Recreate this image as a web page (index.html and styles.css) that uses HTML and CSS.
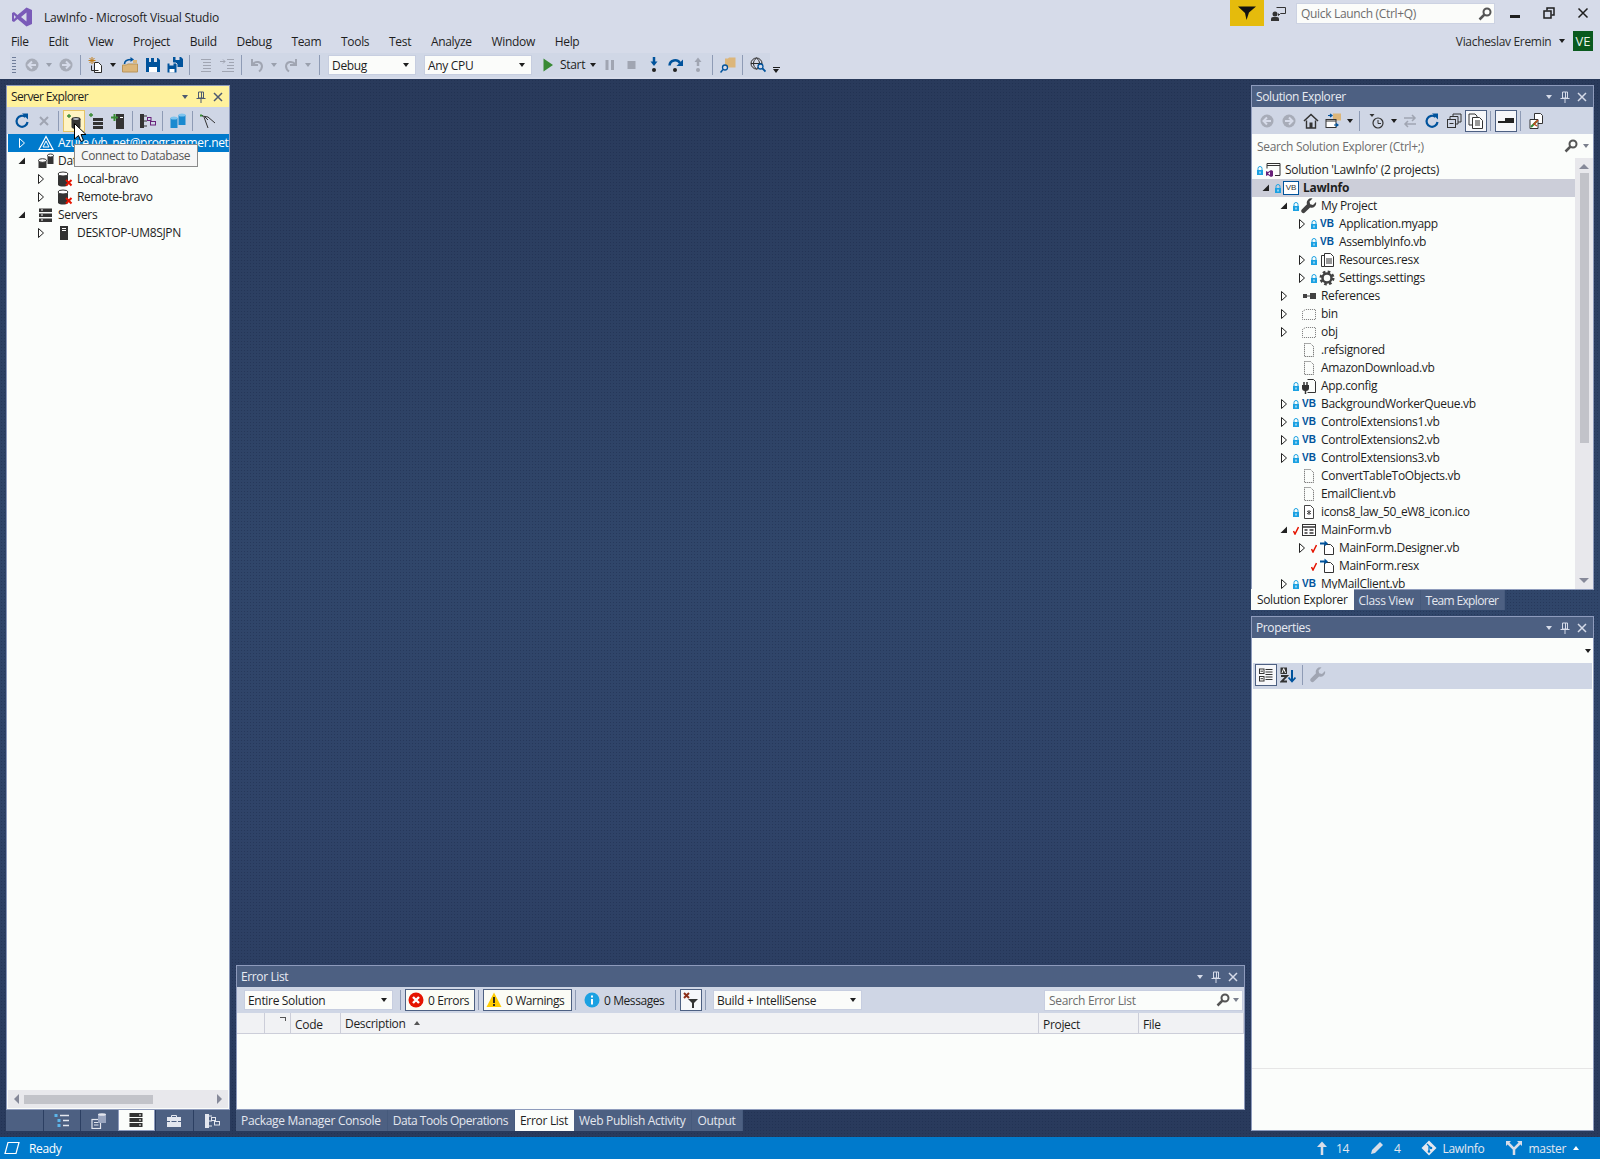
FILE: index.html
```html
<!DOCTYPE html>
<html lang="en">
<head>
<meta charset="utf-8">
<title>LawInfo - Microsoft Visual Studio</title>
<link rel="stylesheet" href="styles.css">
</head>
<body>
<svg class="defs" xmlns="http://www.w3.org/2000/svg">
  <symbol id="logo" viewBox="0 0 20 20"><path d="M14.5 0.5L20 3v14l-5.500 2.500L5.500 12 2 15l-2-1V6l2-1 3.500 3zM14.500 5.500L9 10l5.500 4.500z" fill="#7a5bb8"/><path d="M2 8v4l2-2z" fill="#d6dbe9"/></symbol>
  <symbol id="funnel" viewBox="0 0 18 14"><path d="M0 0.500h18L11 6.500 8.500 14 7 7z" fill="#111"/></symbol>
  <symbol id="feedback" viewBox="0 0 16 16"><circle cx="5" cy="8" r="2.500" fill="#333"/><path d="M1 15v-2a2 2 0 012-2h4a2 2 0 012 2v2z" fill="#333"/><path d="M6.500 1.500h9v6h-5l-2 2v-2" fill="none" stroke="#333"/></symbol>
  <symbol id="search" viewBox="0 0 16 16"><circle cx="10" cy="6" r="3.500" fill="none" stroke="#555" stroke-width="2"/><path d="M7.500 8.500l-5 5" stroke="#555" stroke-width="2.500"/></symbol>
  <symbol id="back" viewBox="0 0 16 16"><circle cx="8" cy="8" r="6.500" fill="#a7acb8"/><path d="M12 8H5M8 4.500L4.500 8 8 11.500" fill="none" stroke="#d6dbe9" stroke-width="2"/></symbol>
  <symbol id="forward" viewBox="0 0 16 16"><circle cx="8" cy="8" r="6.500" fill="#a7acb8"/><path d="M4 8h7M8 4.500L11.500 8 8 11.500" fill="none" stroke="#d6dbe9" stroke-width="2"/></symbol>
  <symbol id="newproj" viewBox="0 0 16 16"><path d="M6.500 5.500h4l3 3v7h-7z" fill="#fff" stroke="#2b2b2b"/><path d="M3.500 8.500v5h7" fill="none" stroke="#2b2b2b"/><path d="M4 0v7M0.500 3.500h7M1.500 1l5 5M6.500 1l-5 5" stroke="#c27d1a"/></symbol>
  <symbol id="open" viewBox="0 0 16 16"><path d="M0.500 8h4l1-1h10v8H0.500z" fill="#dcb67a" stroke="#b9945a"/><path d="M2.500 7c0-3 2-4.500 7-4.500" fill="none" stroke="#00539c" stroke-width="1.600"/><path d="M8.500 0l3.500 2.500L8.500 5z" fill="#00539c"/><rect x="11" y="3" width="4" height="3" fill="#dcb67a"/></symbol>
  <symbol id="save" viewBox="0 0 16 16"><path d="M1 1h12l2 2v12H1z" fill="#00539c"/><rect x="4" y="1" width="2" height="4" fill="#d6dbe9"/><rect x="9" y="1" width="3" height="4" fill="#d6dbe9"/><rect x="4" y="10" width="8" height="5" fill="#fff"/></symbol>
  <symbol id="saveall" viewBox="0 0 16 16"><path d="M6 0h8l2 2v8H6z" fill="#00539c"/><rect x="8.500" y="0" width="4" height="3" fill="#d6dbe9"/><path d="M0 6h9l1 1v9H0z" fill="#00539c" stroke="#d6dbe9"/><rect x="2.500" y="5.500" width="4" height="3" fill="#d6dbe9"/><rect x="2.500" y="12" width="5" height="3.500" fill="#fff"/></symbol>
  <symbol id="indent" viewBox="0 0 16 16"><path d="M4 2.500h10M6 5.500h8M6 8.500h8M6 11.500h8M4 14.500h10" stroke="#a0a5b2"/></symbol>
  <symbol id="outdent" viewBox="0 0 16 16"><path d="M8 2.500h7M10 5.500h5M8 8.500h7M8 11.500h7M3 14.500h12" stroke="#a0a5b2"/><path d="M1 4.500h5M4 2.500l2 2-2 2" fill="none" stroke="#a0a5b2"/></symbol>
  <symbol id="undo" viewBox="0 0 16 16"><path d="M3 2v6h6" fill="none" stroke="#a0a5b2" stroke-width="2"/><path d="M3.500 7.500c3-4 9-3 9.500 1.500 0 2.500-1 4-3 5.500" fill="none" stroke="#a0a5b2" stroke-width="2"/></symbol>
  <symbol id="redo" viewBox="0 0 16 16"><path d="M13 2v6H7" fill="none" stroke="#a0a5b2" stroke-width="2"/><path d="M12.500 7.500c-3-4-9-3-9.500 1.500 0 2.500 1 4 3 5.500" fill="none" stroke="#a0a5b2" stroke-width="2"/></symbol>
  <symbol id="play" viewBox="0 0 16 16"><path d="M3.500 1.500L13 8l-9.500 6.500z" fill="#388a34"/></symbol>
  <symbol id="pause" viewBox="0 0 16 16"><rect x="3.500" y="3" width="3" height="10" fill="#a0a5b2"/><rect x="9" y="3" width="3" height="10" fill="#a0a5b2"/></symbol>
  <symbol id="stop" viewBox="0 0 16 16"><rect x="3.500" y="4" width="8" height="8" fill="#a0a5b2"/></symbol>
  <symbol id="stepin" viewBox="0 0 16 16"><path d="M8 0v6" stroke="#00539c" stroke-width="2.500"/><path d="M4.500 4.500h7L8 9z" fill="#00539c"/><circle cx="8" cy="13" r="2" fill="#222"/></symbol>
  <symbol id="stepover" viewBox="0 0 16 16"><path d="M1.500 8.500C2 3 9 1.500 12 6" fill="none" stroke="#00539c" stroke-width="2.500"/><path d="M15 2.500v6.500H8.500z" fill="#00539c"/><circle cx="7" cy="13" r="2" fill="#222"/></symbol>
  <symbol id="stepout" viewBox="0 0 16 16"><path d="M8 3v6" stroke="#a0a5b2" stroke-width="2.500"/><path d="M4.500 5h7L8 0.500z" fill="#a0a5b2"/><circle cx="8" cy="13" r="2" fill="#a0a5b2"/></symbol>
  <symbol id="findfolder" viewBox="0 0 16 16"><path d="M5 1.500h3l1-1h6.500v10H5z" fill="#dcb67a"/><circle cx="5" cy="10.500" r="2.500" fill="#d6dbe9" stroke="#00539c" stroke-width="1.300"/><path d="M3 12.500l-2.500 3" stroke="#00539c" stroke-width="1.500"/></symbol>
  <symbol id="globe" viewBox="0 0 16 16"><circle cx="6.500" cy="6.500" r="5.500" fill="#d6dbe9" stroke="#2b2b2b"/><path d="M1 6.500h11M6.500 1c-4 3-4 8 0 11M6.500 1c4 3 4 8 0 11" fill="none" stroke="#2b2b2b"/><circle cx="10.500" cy="9.500" r="2.500" fill="#d6dbe9" stroke="#00539c" stroke-width="1.300"/><path d="M12.500 11.500l3 3" stroke="#00539c" stroke-width="1.800"/></symbol>
  <symbol id="refresh" viewBox="0 0 16 16"><path d="M11.500 4A5.500 5.500 0 1013.500 9" fill="none" stroke="#00539c" stroke-width="2.200"/><path d="M8 0.500h6v6z" fill="#00539c"/></symbol>
  <symbol id="xgray" viewBox="0 0 16 16"><path d="M4 4l8 8M12 4l-8 8" stroke="#a0a5b2" stroke-width="2"/></symbol>
  <symbol id="connect" viewBox="0 0 16 16"><path d="M3 1v4M1 3h4" stroke="#388a34" stroke-width="1.300"/><ellipse cx="10" cy="6" rx="4.500" ry="2" fill="#333"/><path d="M5.500 6v8c0 1 2 2 4.500 2s4.500-1 4.500-2V6" fill="#333"/><ellipse cx="10" cy="6" rx="3" ry="1" fill="#b9bec9"/></symbol>
  <symbol id="addserver" viewBox="0 0 16 16"><path d="M3 0v4M1 2h4" stroke="#388a34" stroke-width="1.300"/><rect x="5" y="5" width="10" height="3" fill="#333"/><rect x="5" y="9" width="10" height="3" fill="#333"/><rect x="5" y="13" width="10" height="3" fill="#333"/></symbol>
  <symbol id="addtower" viewBox="0 0 16 16"><rect x="6" y="1" width="8" height="15" fill="#333"/><path d="M1 4.500h7M4.500 1v7" stroke="#388a34" stroke-width="2"/><rect x="10" y="4" width="3" height="1" fill="#fff"/></symbol>
  <symbol id="diagram" viewBox="0 0 16 16"><rect x="0" y="1" width="4" height="14" fill="#333"/><path d="M4 3h3M4 8h3M4 13h3" stroke="#333"/><rect x="7.500" y="4.500" width="3.500" height="3" fill="none" stroke="#68217a"/><rect x="10.500" y="8.500" width="5" height="3.500" fill="none" stroke="#68217a"/></symbol>
  <symbol id="dbblue" viewBox="0 0 16 16"><path d="M0.500 5h7v10h-7z" fill="#1b8ad0"/><ellipse cx="4" cy="5" rx="3.500" ry="1.500" fill="#7fc4ee"/><path d="M8.500 2h7v10h-7z" fill="#1b8ad0"/><ellipse cx="12" cy="2" rx="3.500" ry="1.500" fill="#7fc4ee"/></symbol>
  <symbol id="picktool" viewBox="0 0 16 16"><path d="M1 1v3M0 2.500h3" stroke="#388a34"/><path d="M2 3l6 1 7 6M4 4l4 11M8 7l-3-3" fill="none" stroke="#333"/></symbol>
  <symbol id="azure" viewBox="0 0 16 16"><path d="M8 1.500L1 14.500h14z" fill="none" stroke="#fff" stroke-width="1.200"/><path d="M8 6L5 12h6z" fill="none" stroke="#fff"/></symbol>
  <symbol id="dataconn" viewBox="0 0 16 16"><path d="M0.500 7.500h8v7.500h-8z" fill="#333"/><ellipse cx="4.500" cy="7.500" rx="4" ry="1.800" fill="#fff" stroke="#333"/><path d="M9.500 2h6v9h-6z" fill="#333"/><ellipse cx="12.500" cy="2.500" rx="3" ry="1.500" fill="#fff" stroke="#333"/></symbol>
  <symbol id="dbx" viewBox="0 0 16 16"><path d="M1 3h10v11c-2 2-8 2-10 0z" fill="#333"/><ellipse cx="6" cy="3" rx="5" ry="2" fill="#fff" stroke="#333"/><path d="M9 9l5.500 5.500M14.500 9L9 14.500" stroke="#e51400" stroke-width="2"/></symbol>
  <symbol id="servers" viewBox="0 0 16 16"><rect x="1" y="1.500" width="13" height="3.500" fill="#333"/><rect x="1" y="6.500" width="13" height="3.500" fill="#333"/><rect x="1" y="11.500" width="13" height="3.500" fill="#333"/><path d="M3 3h2M3 8h2M3 13h2" stroke="#fff"/></symbol>
  <symbol id="tower" viewBox="0 0 16 16"><rect x="3" y="1" width="8" height="14" fill="#333"/><path d="M5 3.500h4M5 5.500h4" stroke="#fff"/></symbol>
  <symbol id="home" viewBox="0 0 16 16"><path d="M1 8l7-6.500L15 8" fill="none" stroke="#333" stroke-width="1.600"/><path d="M3.500 7.500v7.500h9V7.500" fill="none" stroke="#333" stroke-width="1.400"/><rect x="6.500" y="9.500" width="3" height="5.500" fill="#333"/></symbol>
  <symbol id="syncview" viewBox="0 0 16 16"><rect x="8" y="0.500" width="8" height="7" fill="#dcb67a"/><rect x="1" y="6.500" width="10" height="8" fill="#fff" stroke="#333"/><path d="M1 8h10" stroke="#333"/><path d="M3 2.500h4M5 1l2 1.500L5 4M9 12h4M11 10.500l2 1.500-2 1.500" fill="none" stroke="#00539c" stroke-width="1.200"/></symbol>
  <symbol id="clock" viewBox="0 0 16 16"><path d="M0.500 1h5L3 4z" fill="#333"/><circle cx="9" cy="10" r="5" fill="none" stroke="#333" stroke-width="1.200"/><path d="M9 7v3.500h3" fill="none" stroke="#333"/></symbol>
  <symbol id="swap" viewBox="0 0 16 16"><path d="M2 5h11M10 2l3 3-3 3M14 11H3M6 8l-3 3 3 3" fill="none" stroke="#a0a5b2" stroke-width="1.500"/></symbol>
  <symbol id="collapse" viewBox="0 0 16 16"><rect x="1.500" y="6.500" width="8" height="8" fill="none" stroke="#333"/><path d="M4 6V3.500h8V11h-2M7 3V1h8v8h-3" fill="none" stroke="#333"/><path d="M3.500 10.500h4" stroke="#333"/></symbol>
  <symbol id="showall" viewBox="0 0 16 16"><path d="M1 1h6l2 2v2" fill="none" stroke="#333"/><path d="M1 1v11h3" fill="none" stroke="#333"/><path d="M4.500 4.500h7l3 3v8h-10z" fill="#fff" stroke="#333"/><path d="M7 8h5M7 10h5M7 12h5" stroke="#333"/></symbol>
  <symbol id="preview" viewBox="0 0 16 16"><rect x="0" y="8" width="16" height="2" fill="#222"/><rect x="7" y="5" width="9" height="4" fill="#222"/></symbol>
  <symbol id="propspage" viewBox="0 0 16 16"><path d="M6.500 0.500h6l2 2v8h-8z" fill="#fff" stroke="#333"/><path d="M2 6.500h8v9H2z" fill="#fff" stroke="#333"/><path d="M3 14l6-6" stroke="#388a34" stroke-width="2"/><path d="M9 13l-3-2 4-4" fill="none" stroke="#c2491d" stroke-width="1.500"/></symbol>
  <symbol id="slnfile" viewBox="0 0 16 16"><path d="M2 1.500h13v12h-5" fill="none" stroke="#333"/><path d="M2 1.500v5" stroke="#333"/><path d="M2 3.500h13" stroke="#333"/><path d="M1 9l2 1 3-2 2 1v5l-2 1-3-2-2 1z" fill="#68217a"/><path d="M5 10v3l-2-1.500z" fill="#fff"/></symbol>
  <symbol id="wrench" viewBox="0 0 16 16"><path d="M15 4l-3 3-2.800-.8L8.500 3.500 11.500.5a4.500 4.500 0 00-5.500 5.800L0.800 11.500a2.200 2.200 0 003.100 3.100l5.200-5.200A4.500 4.500 0 0015 4z" fill="#424242"/></symbol>
  <symbol id="wrenchgray" viewBox="0 0 16 16"><path d="M15 4l-3 3-2.800-.8L8.500 3.500 11.500.5a4.500 4.500 0 00-5.500 5.800L0.800 11.500a2.200 2.200 0 003.100 3.100l5.200-5.200A4.500 4.500 0 0015 4z" fill="#a0a5b2"/></symbol>
  <symbol id="resx" viewBox="0 0 16 16"><path d="M5.500 1.500h6l3 3v10h-9z" fill="#fff" stroke="#333"/><path d="M5.500 3.500h-3v11h3" fill="none" stroke="#333"/><path d="M7 7h6M7 9h6M7 11h6" stroke="#333"/></symbol>
  <symbol id="gear" viewBox="0 0 16 16"><circle cx="8" cy="8" r="6" fill="none" stroke="#424242" stroke-width="3" stroke-dasharray="2.500 2.200"/><circle cx="8" cy="8" r="4.500" fill="none" stroke="#424242" stroke-width="2.500"/></symbol>
  <symbol id="refs" viewBox="0 0 16 16"><rect x="2" y="6" width="4" height="4" fill="#424242"/><path d="M6 8h3" stroke="#424242"/><rect x="9" y="5" width="6" height="6" fill="#424242"/></symbol>
  <symbol id="dotfolder" viewBox="0 0 16 16"><path d="M1.500 5.500l3-2h10v10h-13z" fill="none" stroke="#777" stroke-dasharray="1 1"/></symbol>
  <symbol id="dotfile" viewBox="0 0 16 16"><path d="M3.500 1.500h6l3 3v10h-9z" fill="none" stroke="#555" stroke-dasharray="1 1"/></symbol>
  <symbol id="config" viewBox="0 0 16 16"><path d="M6.500 1.500h6l2 2v11h-8" fill="none" stroke="#333"/><path d="M1 7h7v3a3 3 0 01-3 3H4a3 3 0 01-3-3z" fill="#333"/><path d="M3 4v3M6 4v3M4.500 13v3" stroke="#333" stroke-width="1.500"/></symbol>
  <symbol id="icofile" viewBox="0 0 16 16"><path d="M3.500 1.500h6l3 3v10h-9z" fill="#fff" stroke="#444"/><path d="M8 6v5M6 7l4 3M10 7l-4 3" stroke="#444"/></symbol>
  <symbol id="form" viewBox="0 0 16 16"><rect x="1.500" y="2.500" width="13" height="11" fill="#fff" stroke="#333"/><path d="M1.500 5h13" stroke="#333" stroke-width="1.500"/><path d="M3.500 8h3M8.500 8h4M3.500 11h3M8.500 11h4" stroke="#333" stroke-width="1.500"/></symbol>
  <symbol id="linkdoc" viewBox="0 0 16 16"><path d="M5.500 4.500h6l3 3v7h-9z" fill="#fff" stroke="#333"/><path d="M1 3.500h6" stroke="#00539c" stroke-width="2"/><path d="M5.500 0.500L9 3.500 5.500 6.500z" fill="#00539c"/></symbol>
  <symbol id="categ" viewBox="0 0 16 16"><rect x="1.500" y="2" width="4.500" height="4.500" fill="#fff" stroke="#333"/><rect x="1.500" y="9.500" width="4.500" height="4.500" fill="#fff" stroke="#333"/><path d="M2.500 4.200h2.500M2.500 11.700h2.500" stroke="#333"/><path d="M7.500 2.500h7M7.500 5h7M7.500 7.500h7M7.500 10h7M7.500 12.500h7" stroke="#333"/></symbol>
  <symbol id="alpha" viewBox="0 0 16 16"><rect x="0.500" y="0.500" width="6.500" height="6.500" fill="#333"/><path d="M2 6l1.700-4.500L5.500 6" fill="none" stroke="#fff"/><path d="M1 9h6L1.500 14.500H7" fill="none" stroke="#333" stroke-width="1.800"/><path d="M12 3v11" stroke="#00539c" stroke-width="2"/><path d="M8.500 10.500L12 14.500l3.500-4" fill="none" stroke="#00539c" stroke-width="1.800"/></symbol>
  <symbol id="err" viewBox="0 0 16 16"><circle cx="8" cy="8" r="7.500" fill="#e51400"/><path d="M5 5l6 6M11 5l-6 6" stroke="#fff" stroke-width="2.400"/></symbol>
  <symbol id="warn" viewBox="0 0 16 16"><path d="M8 0.500L15.500 15H0.500z" fill="#fc0"/><path d="M8 5v6M8 12v2" stroke="#1e1e1e" stroke-width="1.800"/></symbol>
  <symbol id="info" viewBox="0 0 16 16"><circle cx="8" cy="8" r="7.500" fill="#1ba1e2"/><path d="M8 7v5.500M8 3.500v2" stroke="#fff" stroke-width="2"/></symbol>
  <symbol id="xfilter" viewBox="0 0 16 16"><path d="M1 1l5 5M6 1L1 6" stroke="#8c2f1b" stroke-width="2"/><path d="M5 7h10l-4 4v5H9v-5z" fill="#333"/></symbol>
  <symbol id="tlist" viewBox="0 0 16 16"><rect x="0.500" y="1" width="3" height="3" fill="#5cb5ea"/><rect x="3.500" y="6" width="3" height="3" fill="#5cb5ea"/><rect x="3.500" y="11" width="3" height="3" fill="#5cb5ea"/><path d="M6 2.500h9M9 7.500h6M9 12.500h6" stroke="#e3e6ee" stroke-width="1.400"/></symbol>
  <symbol id="tdocs" viewBox="0 0 16 16"><rect x="1" y="6.500" width="8.500" height="9" fill="none" stroke="#e3e6ee" stroke-width="1.200"/><path d="M3 9.500h4.500M3 12h4.500" stroke="#e3e6ee"/><rect x="7" y="1" width="8" height="9" fill="#9aa6c0"/><ellipse cx="11" cy="1.500" rx="4" ry="1.300" fill="#e3e6ee"/></symbol>
  <symbol id="tserv" viewBox="0 0 16 16"><rect x="1.500" y="1" width="13" height="4" fill="#333"/><rect x="1.500" y="6" width="13" height="4" fill="#333"/><rect x="1.500" y="11" width="13" height="4" fill="#333"/><path d="M11 3h2M11 8h2M11 13h2" stroke="#fff"/></symbol>
  <symbol id="tbox" viewBox="0 0 16 16"><rect x="1" y="4" width="14" height="10" fill="#e3e6ee"/><path d="M5.500 4V2.500h5V4" fill="none" stroke="#e3e6ee"/><path d="M1 8.500h14" stroke="#4d6082"/><rect x="4" y="7.500" width="1.500" height="2.500" fill="#e3e6ee"/><rect x="10.500" y="7.500" width="1.500" height="2.500" fill="#e3e6ee"/></symbol>
  <symbol id="tdiag" viewBox="0 0 16 16"><rect x="1" y="1" width="4" height="14" fill="#e3e6ee"/><path d="M5 3h3M5 8h3M5 13h3" stroke="#e3e6ee"/><rect x="7.500" y="4.500" width="4" height="3" fill="none" stroke="#e3e6ee"/><rect x="10.500" y="8.500" width="5" height="3.500" fill="none" stroke="#e3e6ee"/></symbol>
  <symbol id="ready" viewBox="0 0 16 16"><path d="M4 2.500h11l-3 11H1z" fill="none" stroke="#fff" stroke-width="1.200"/></symbol>
  <symbol id="up" viewBox="0 0 16 16"><path d="M8 15V5" stroke="#d8dde8" stroke-width="2.500"/><path d="M3 7l5-5.500L13 7z" fill="#d8dde8"/></symbol>
  <symbol id="pencil" viewBox="0 0 16 16"><path d="M11 2l3 3-8 8-4 1 1-4z" fill="#d8dde8"/></symbol>
  <symbol id="gitd" viewBox="0 0 16 16"><path d="M8 0.500L15.500 8 8 15.500 0.500 8z" fill="#e4e7ef"/><path d="M6 4l4 4M8 6v6" stroke="#007acc" stroke-width="1.300"/><circle cx="8" cy="11.500" r="1.300" fill="#007acc"/><circle cx="10" cy="8" r="1.300" fill="#007acc"/></symbol>
  <symbol id="branch" viewBox="0 0 16 16"><path d="M8 15V9L2 3M8 9l6-6" fill="none" stroke="#d8dde8" stroke-width="2.500"/><path d="M0 1h5L0 6zM16 1h-5l5 5z" fill="#d8dde8"/></symbol>
  <symbol id="pin" viewBox="0 0 12 12"><path d="M3.500 1h5v6h-5zM1.500 7.500h9M6 8v4M6.500 1v6" fill="none" stroke="currentColor"/></symbol>
  <symbol id="closex" viewBox="0 0 12 12"><path d="M2 2l8 8M10 2l-8 8" stroke="currentColor" stroke-width="1.500"/></symbol>
  <symbol id="winclose" viewBox="0 0 12 12"><path d="M1.500 1.500l9 9M10.500 1.500l-9 9" stroke="#1e1e1e" stroke-width="1.500"/></symbol>
  <symbol id="winrest" viewBox="0 0 12 12"><rect x="1" y="4" width="7" height="7" fill="none" stroke="#1e1e1e" stroke-width="1.500"/><path d="M4 3.500V1h7v7H8.500" fill="none" stroke="#1e1e1e" stroke-width="1.500"/></symbol>
  <symbol id="cursor" viewBox="0 0 12 20"><path d="M0.500 0.500v15.500l4-3.500 2.500 6 2.500-1-2.500-6h5z" fill="#fff" stroke="#000"/></symbol>
  <symbol id="tw-closed" viewBox="0 0 10 10"><path d="M2.500 0.500L7.500 5l-5 4.500z" fill="#fdfefc" stroke="#222"/></symbol>
  <symbol id="tw-closedw" viewBox="0 0 10 10"><path d="M2.500 0.500L7.500 5l-5 4.500z" fill="none" stroke="#fff"/></symbol>
  <symbol id="tw-open" viewBox="0 0 10 10"><path d="M8 1.500v6.500H1.500z" fill="#222"/></symbol>
  <symbol id="lock" viewBox="0 0 6 9"><path d="M1 4.500V2.500a2 2 0 014 0v2" fill="none" stroke="#1ba1e2"/><rect y="4" width="6" height="5" fill="#1ba1e2"/><rect x="2.500" y="5.500" width="1" height="2" fill="#fff"/></symbol>
  <symbol id="tick" viewBox="0 0 6 9"><path d="M0.500 5l1.500 3L5.500 1" fill="none" stroke="#e51400" stroke-width="1.500"/></symbol>
</svg>

<div class="app">
  <header class="titlebar">
    <svg class="logo"><use href="#logo"/></svg>
    <span class="apptitle">LawInfo - Microsoft Visual Studio</span>
    <span class="grow"></span>
    <span class="notify"><svg class="funnel"><use href="#funnel"/></svg></span>
    <span class="feedback"><svg class="i"><use href="#feedback"/></svg></span>
    <div class="quick"><span class="ph grow">Quick Launch (Ctrl+Q)</span><svg class="i"><use href="#search"/></svg></div>
    <span class="winbtn wb-min"><span class="minbar"></span></span>
    <span class="winbtn"><svg class="i12"><use href="#winrest"/></svg></span>
    <span class="winbtn"><svg class="i12"><use href="#winclose"/></svg></span>
  </header>

  <nav class="menubar">
    <span>File</span><span>Edit</span><span>View</span><span>Project</span><span>Build</span><span>Debug</span><span>Team</span><span>Tools</span><span>Test</span><span>Analyze</span><span>Window</span><span>Help</span>
    <span class="grow"></span>
    <span class="user">Viacheslav Eremin</span><i class="caret user-caret"></i><span class="avatar">VE</span>
  </nav>

  <div class="maintoolbar">
    <div class="tray">
      <span class="grip"></span>
      <span class="btn btn-first"><svg class="i"><use href="#back"/></svg></span><span class="cw"><i class="caret dim"></i></span>
      <span class="btn"><svg class="i"><use href="#forward"/></svg></span><span class="tsep"></span>
      <span class="btn"><svg class="i"><use href="#newproj"/></svg></span><span class="cw"><i class="caret"></i></span>
      <span class="btn"><svg class="i"><use href="#open"/></svg></span>
      <span class="btn btn-save"><svg class="i"><use href="#save"/></svg></span>
      <span class="btn"><svg class="i"><use href="#saveall"/></svg></span><span class="tsep"></span>
      <span class="btn"><svg class="i"><use href="#indent"/></svg></span>
      <span class="btn"><svg class="i"><use href="#outdent"/></svg></span><span class="tsep"></span>
      <span class="btn"><svg class="i"><use href="#undo"/></svg></span><span class="cw"><i class="caret dim"></i></span>
      <span class="btn"><svg class="i"><use href="#redo"/></svg></span><span class="cw"><i class="caret dim"></i></span><span class="tsep tsep-wide"></span>
      <div class="combo combo-debug"><span class="grow">Debug</span><i class="caret"></i></div>
      <div class="combo combo-cpu"><span class="grow">Any CPU</span><i class="caret"></i></div>
      <span class="btn btn-play"><svg class="i"><use href="#play"/></svg></span><span class="start">Start</span><span class="cw"><i class="caret"></i></span>
      <span class="btn"><svg class="i"><use href="#pause"/></svg></span>
      <span class="btn"><svg class="i"><use href="#stop"/></svg></span>
      <span class="btn"><svg class="i"><use href="#stepin"/></svg></span>
      <span class="btn"><svg class="i"><use href="#stepover"/></svg></span>
      <span class="btn"><svg class="i"><use href="#stepout"/></svg></span><span class="tsep"></span>
      <span class="btn"><svg class="i"><use href="#findfolder"/></svg></span><span class="tsep"></span>
      <span class="btn"><svg class="i"><use href="#globe"/></svg></span>
    </div>
    <span class="overflow"><i class="ovline"></i><i class="caret"></i></span>
  </div>

  <main class="workspace">
    <section class="col-left dock">
      <div class="panel grow">
        <div class="ptitle active"><span class="grow">Server Explorer</span><i class="caret"></i><svg class="pctl"><use href="#pin"/></svg><svg class="pctl"><use href="#closex"/></svg></div>
        <div class="ptools">
          <span class="btn"><svg class="i"><use href="#refresh"/></svg></span>
          <span class="btn"><svg class="i"><use href="#xgray"/></svg></span><span class="tsep"></span>
          <span class="btn hover"><svg class="i"><use href="#connect"/></svg></span>
          <span class="btn"><svg class="i"><use href="#addserver"/></svg></span>
          <span class="btn"><svg class="i"><use href="#addtower"/></svg></span><span class="tsep"></span>
          <span class="btn"><svg class="i"><use href="#diagram"/></svg></span><span class="tsep"></span>
          <span class="btn"><svg class="i"><use href="#dbblue"/></svg></span><span class="tsep"></span>
          <span class="btn"><svg class="i"><use href="#picktool"/></svg></span>
        </div>
        <div class="tree grow server-tree">
          <div class="row sx0 selected"><svg class="tw"><use href="#tw-closedw"/></svg><span class="st"></span><svg class="ic"><use href="#azure"/></svg><span class="lb">Azure (vb_net@programmer.net)</span></div>
          <div class="row sx0"><svg class="tw"><use href="#tw-open"/></svg><span class="st"></span><svg class="ic"><use href="#dataconn"/></svg><span class="lb">Data Connections</span></div>
          <div class="row sx1"><svg class="tw"><use href="#tw-closed"/></svg><span class="st"></span><svg class="ic"><use href="#dbx"/></svg><span class="lb">Local-bravo</span></div>
          <div class="row sx1"><svg class="tw"><use href="#tw-closed"/></svg><span class="st"></span><svg class="ic"><use href="#dbx"/></svg><span class="lb">Remote-bravo</span></div>
          <div class="row sx0"><svg class="tw"><use href="#tw-open"/></svg><span class="st"></span><svg class="ic"><use href="#servers"/></svg><span class="lb">Servers</span></div>
          <div class="row sx1"><svg class="tw"><use href="#tw-closed"/></svg><span class="st"></span><svg class="ic"><use href="#tower"/></svg><span class="lb">DESKTOP-UM8SJPN</span></div>
        </div>
        <div class="hscroll"><i class="arrow-l"></i><span class="hthumb"></span><span class="grow"></span><i class="arrow-r"></i></div>
      </div>
      <div class="tabs icontabs">
        <span class="grow"></span>
        <span class="itab"><svg class="i"><use href="#tlist"/></svg></span>
        <span class="itab"><svg class="i"><use href="#tdocs"/></svg></span>
        <span class="itab on"><svg class="i"><use href="#tserv"/></svg></span>
        <span class="itab"><svg class="i"><use href="#tbox"/></svg></span>
        <span class="itab"><svg class="i"><use href="#tdiag"/></svg></span>
      </div>
      <div class="tip">Connect to Database</div>
      <svg class="mouse"><use href="#cursor"/></svg>
    </section>

    <section class="col-center">
      <div class="dock errordock">
        <div class="panel grow">
          <div class="ptitle"><span class="grow">Error List</span><i class="caret light"></i><svg class="pctl"><use href="#pin"/></svg><svg class="pctl"><use href="#closex"/></svg></div>
          <div class="ptools errtools">
            <div class="combo combo-scope"><span class="grow">Entire Solution</span><i class="caret"></i></div><span class="tsep esep"></span>
            <span class="fbtn f-err"><svg class="i"><use href="#err"/></svg>0 Errors</span><span class="tsep esep"></span>
            <span class="fbtn f-warn"><svg class="i"><use href="#warn"/></svg>0 Warnings</span><span class="tsep esep"></span>
            <span class="fplain"><svg class="i"><use href="#info"/></svg>0 Messages</span><span class="tsep esep"></span>
            <span class="btn pressed"><svg class="i"><use href="#xfilter"/></svg></span><span class="tsep esep"></span>
            <div class="combo combo-build"><span class="grow">Build + IntelliSense</span><i class="caret"></i></div>
            <span class="grow"></span>
            <div class="searchbox search-err"><span class="ph grow">Search Error List</span><svg class="i"><use href="#search"/></svg><i class="caret dimmer"></i></div>
          </div>
          <div class="gridhead">
            <span class="gh"></span>
            <span class="gh gh-corner"><i class="cornermark"></i></span>
            <span class="gh">Code</span>
            <span class="gh"><span class="ghd">Description</span><i class="caret caret-up"></i></span>
            <span class="gh">Project</span>
            <span class="gh">File</span>
            <span class="gh"></span>
          </div>
          <div class="gridbody grow"></div>
        </div>
        <div class="tabs errtabs">
          <span class="tab">Package Manager Console</span>
          <span class="tab tab-data">Data Tools Operations</span>
          <span class="tab on">Error List</span>
          <span class="tab">Web Publish Activity</span>
          <span class="tab">Output</span>
        </div>
      </div>
    </section>

    <section class="col-right">
      <div class="dock soldock">
        <div class="panel grow">
          <div class="ptitle"><span class="grow">Solution Explorer</span><i class="caret light"></i><svg class="pctl"><use href="#pin"/></svg><svg class="pctl"><use href="#closex"/></svg></div>
          <div class="ptools">
            <span class="btn"><svg class="i"><use href="#back"/></svg></span>
            <span class="btn"><svg class="i"><use href="#forward"/></svg></span>
            <span class="btn"><svg class="i"><use href="#home"/></svg></span>
            <span class="btn"><svg class="i"><use href="#syncview"/></svg></span><span class="cw"><i class="caret"></i></span><span class="tsep"></span>
            <span class="btn ml2"><svg class="i"><use href="#clock"/></svg></span><span class="cw cw-tight"><i class="caret"></i></span>
            <span class="btn"><svg class="i"><use href="#swap"/></svg></span>
            <span class="btn"><svg class="i"><use href="#refresh"/></svg></span>
            <span class="btn"><svg class="i"><use href="#collapse"/></svg></span>
            <span class="btn pressed"><svg class="i"><use href="#showall"/></svg></span><span class="tsep"></span>
            <span class="btn pressed"><svg class="i"><use href="#preview"/></svg></span><span class="tsep"></span>
            <span class="btn"><svg class="i"><use href="#propspage"/></svg></span>
          </div>
          <div class="searchbox search-sol"><span class="ph grow">Search Solution Explorer (Ctrl+;)</span><svg class="i"><use href="#search"/></svg><i class="caret dimmer"></i></div>
          <div class="treewrap grow">
            <div class="tree grow sol-tree">
              <div class="row d0"><svg class="st"><use href="#lock"/></svg><svg class="ic"><use href="#slnfile"/></svg><span class="lb">Solution 'LawInfo' (2 projects)</span></div>
              <div class="row d1 current"><svg class="tw"><use href="#tw-open"/></svg><svg class="st"><use href="#lock"/></svg><span class="vbproj">VB</span><span class="lb">LawInfo</span></div>
              <div class="row d2"><svg class="tw"><use href="#tw-open"/></svg><svg class="st"><use href="#lock"/></svg><svg class="ic"><use href="#wrench"/></svg><span class="lb">My Project</span></div>
              <div class="row d3"><svg class="tw"><use href="#tw-closed"/></svg><svg class="st"><use href="#lock"/></svg><span class="vb">VB</span><span class="lb">Application.myapp</span></div>
              <div class="row d3"><span class="tw"></span><svg class="st"><use href="#lock"/></svg><span class="vb">VB</span><span class="lb">AssemblyInfo.vb</span></div>
              <div class="row d3"><svg class="tw"><use href="#tw-closed"/></svg><svg class="st"><use href="#lock"/></svg><svg class="ic"><use href="#resx"/></svg><span class="lb">Resources.resx</span></div>
              <div class="row d3"><svg class="tw"><use href="#tw-closed"/></svg><svg class="st"><use href="#lock"/></svg><svg class="ic"><use href="#gear"/></svg><span class="lb">Settings.settings</span></div>
              <div class="row d2"><svg class="tw"><use href="#tw-closed"/></svg><span class="st"></span><svg class="ic"><use href="#refs"/></svg><span class="lb">References</span></div>
              <div class="row d2"><svg class="tw"><use href="#tw-closed"/></svg><span class="st"></span><svg class="ic"><use href="#dotfolder"/></svg><span class="lb">bin</span></div>
              <div class="row d2"><svg class="tw"><use href="#tw-closed"/></svg><span class="st"></span><svg class="ic"><use href="#dotfolder"/></svg><span class="lb">obj</span></div>
              <div class="row d2"><span class="tw"></span><span class="st"></span><svg class="ic"><use href="#dotfile"/></svg><span class="lb">.refsignored</span></div>
              <div class="row d2"><span class="tw"></span><span class="st"></span><svg class="ic"><use href="#dotfile"/></svg><span class="lb">AmazonDownload.vb</span></div>
              <div class="row d2"><span class="tw"></span><svg class="st"><use href="#lock"/></svg><svg class="ic"><use href="#config"/></svg><span class="lb">App.config</span></div>
              <div class="row d2"><svg class="tw"><use href="#tw-closed"/></svg><svg class="st"><use href="#lock"/></svg><span class="vb">VB</span><span class="lb">BackgroundWorkerQueue.vb</span></div>
              <div class="row d2"><svg class="tw"><use href="#tw-closed"/></svg><svg class="st"><use href="#lock"/></svg><span class="vb">VB</span><span class="lb">ControlExtensions1.vb</span></div>
              <div class="row d2"><svg class="tw"><use href="#tw-closed"/></svg><svg class="st"><use href="#lock"/></svg><span class="vb">VB</span><span class="lb">ControlExtensions2.vb</span></div>
              <div class="row d2"><svg class="tw"><use href="#tw-closed"/></svg><svg class="st"><use href="#lock"/></svg><span class="vb">VB</span><span class="lb">ControlExtensions3.vb</span></div>
              <div class="row d2"><span class="tw"></span><span class="st"></span><svg class="ic"><use href="#dotfile"/></svg><span class="lb">ConvertTableToObjects.vb</span></div>
              <div class="row d2"><span class="tw"></span><span class="st"></span><svg class="ic"><use href="#dotfile"/></svg><span class="lb">EmailClient.vb</span></div>
              <div class="row d2"><span class="tw"></span><svg class="st"><use href="#lock"/></svg><svg class="ic"><use href="#icofile"/></svg><span class="lb">icons8_law_50_eW8_icon.ico</span></div>
              <div class="row d2"><svg class="tw"><use href="#tw-open"/></svg><svg class="st"><use href="#tick"/></svg><svg class="ic"><use href="#form"/></svg><span class="lb">MainForm.vb</span></div>
              <div class="row d3"><svg class="tw"><use href="#tw-closed"/></svg><svg class="st"><use href="#tick"/></svg><svg class="ic"><use href="#linkdoc"/></svg><span class="lb">MainForm.Designer.vb</span></div>
              <div class="row d3"><span class="tw"></span><svg class="st"><use href="#tick"/></svg><svg class="ic"><use href="#linkdoc"/></svg><span class="lb">MainForm.resx</span></div>
              <div class="row d2"><svg class="tw"><use href="#tw-closed"/></svg><svg class="st"><use href="#lock"/></svg><span class="vb">VB</span><span class="lb">MyMailClient.vb</span></div>
            </div>
            <div class="vscroll"><i class="arrow-u"></i><span class="vthumb"></span><span class="grow"></span><i class="arrow-d"></i></div>
          </div>
        </div>
        <div class="tabs clear">
          <span class="tab on first">Solution Explorer</span>
          <span class="tab">Class View</span>
          <span class="tab tab-team">Team Explorer</span>
        </div>
      </div>

      <div class="panel grow props">
        <div class="ptitle"><span class="grow">Properties</span><i class="caret light"></i><svg class="pctl"><use href="#pin"/></svg><svg class="pctl"><use href="#closex"/></svg></div>
        <div class="propcombo"><i class="caret"></i></div>
        <div class="ptools proptools">
          <span class="btn pressed"><svg class="i"><use href="#categ"/></svg></span>
          <span class="btn"><svg class="i"><use href="#alpha"/></svg></span><span class="tsep"></span>
          <span class="btn"><svg class="i"><use href="#wrenchgray"/></svg></span>
        </div>
        <div class="propgrid grow"></div>
        <div class="propdesc"></div>
      </div>
    </section>
  </main>

  <footer class="status">
    <svg class="i ready"><use href="#ready"/></svg><span>Ready</span>
    <span class="grow"></span>
    <svg class="i"><use href="#up"/></svg><span class="st-14">14</span>
    <svg class="i"><use href="#pencil"/></svg><span class="st-4">4</span>
    <svg class="i"><use href="#gitd"/></svg><span class="st-law">LawInfo</span>
    <svg class="i"><use href="#branch"/></svg><span class="st-master">master</span><i class="caret caret-up white"></i>
  </footer>
</div>
</body>
</html>
```

FILE: styles.css
```css
* { box-sizing: border-box; }
html, body { margin: 0; height: 100%; }
body {
  font-family: "Open Sans", "Noto Sans", sans-serif;
  font-size: 12px;
  letter-spacing: -0.32px;
  color: #1e1e1e;
  overflow: hidden;
}
.defs { display: none; }
.grow { flex: 1 1 0; min-width: 0; }
.i { width: 16px; height: 16px; display: block; flex: none; }
.i12 { width: 12px; height: 12px; display: block; }
i { display: block; flex: none; }

.app { display: flex; flex-direction: column; height: 1159px; width: 1600px; background: #d6dbe9; }

.caret { width: 0; height: 0; border-left: 3.5px solid transparent; border-right: 3.5px solid transparent; border-top: 4px solid #1e1e1e; }
.caret.dim { border-top-color: #9aa0ad; }
.caret.dimmer { border-top-color: #7a7f8c; }
.caret.light { border-top-color: #d6dbe9; }
.caret-up { border-top: 0; border-bottom: 4px solid #555; }
.caret-up.white { border-bottom-color: #fff; }

/* title bar */
.titlebar { height: 29px; display: flex; align-items: flex-start; padding-left: 12px; flex: none; }
.logo { width: 20px; height: 20px; margin-top: 7px; }
.apptitle { margin: 9px 0 0 12px; line-height: 17px; letter-spacing: -0.22px; }
.notify { width: 34px; height: 26px; background: #e5bb0c; display: flex; align-items: center; justify-content: center; }
.funnel { width: 18px; height: 14px; }
.feedback { margin: 6px 10px 0 6px; }
.quick { width: 199px; height: 21px; margin-top: 3px; background: #fbfcfa; border: 1px solid #ccd2e2; display: flex; align-items: center; padding: 0 1px 0 4px; }
.ph { color: #6d6d6d; }
.winbtn { width: 34px; height: 26px; display: flex; align-items: center; justify-content: center; }
.wb-min { margin-left: 3px; }
.minbar { width: 10px; height: 3px; background: #1e1e1e; margin-top: 6px; }

/* menu */
.menubar { height: 23px; display: flex; align-items: center; gap: 19.800px; padding: 1px 7px 0 11px; flex: none; }
.user { color: #2b2b2b; }
.user-caret { margin: 0 0 0 -12px; }
.avatar { width: 20px; height: 20px; background: #0a5a1e; color: #e8f2e8; margin-left: -12px; margin-top: -1px; display: flex; align-items: center; justify-content: center; font-size: 13px; letter-spacing: 0; }

/* main toolbar */
.maintoolbar { height: 27px; display: flex; flex: none; padding: 1px 0 2px 10px; }
.tray { display: flex; align-items: center; background: #d0d7e6; padding-left: 2px; width: 760px; }
.grip { width: 4px; height: 19px; background-image: radial-gradient(#6f7d99 0.7px, transparent 0.8px); background-size: 2px 3px; }
.btn { width: 22px; height: 22px; display: flex; align-items: center; justify-content: center; flex: none; }
.btn-first { margin-left: 5px; }
.btn-save { margin-left: 1px; }
.cw { width: 12px; height: 22px; display: flex; align-items: center; justify-content: center; flex: none; }
.cw-tight { width: 11px; }
.tsep { width: 1px; height: 20px; background: #8e9bb5; margin: 0 4px 0 3px; flex: none; }
.tsep-wide { margin-left: 5px; }
.combo { height: 20px; background: #fbfcfa; border: 1px solid #c7cee0; display: flex; align-items: center; padding: 0 6px 0 3px; flex: none; }
.combo-debug { width: 88px; margin-left: 4px; }
.combo-cpu { width: 108px; margin-left: 8px; }
.btn-play { margin-left: 5px; }
.start { width: 27px; margin-left: 1px; margin-top: -1px; }
.overflow { width: 12px; display: flex; flex-direction: column; align-items: center; justify-content: flex-end; padding-bottom: 4px; gap: 1px; }
.ovline { width: 7px; height: 1px; background: #1e1e1e; }
.hover { background: #fff4c4; border: 1px solid #e5c365; }
.pressed { background: #f6f7fa; border: 1px solid #4d6082; }
.ml2 { margin-left: 2px; }

/* workspace */
.workspace {
  flex: 1 1 0; min-height: 0; display: flex; gap: 6px; padding: 6px;
  background-color: #2c3f62;
  background-image:
    radial-gradient(rgba(25,38,70,.38) 0.6px, transparent 0.8px),
    linear-gradient(#293a5b 0%, #30466a 45%, #2f4368 70%, #293a5c 100%);
  background-size: 3px 3px, 100% 100%;
}
.col-left { width: 224px; flex: none; }
.col-center { flex: 1 1 0; min-width: 0; display: flex; flex-direction: column; justify-content: flex-end; }
.col-right { width: 343px; flex: none; display: flex; flex-direction: column; gap: 6px; }
.dock { display: flex; flex-direction: column; position: relative; }
.errordock { height: 166px; }
.soldock { height: 525px; flex: none; }

.panel { display: flex; flex-direction: column; border: 1px solid #8e9bbc; background: #fbfdfb; min-height: 0; overflow: hidden; }
.ptitle { height: 21px; flex: none; background: #4d6082; color: #e9ecf3; display: flex; align-items: center; padding: 0 5px 0 4px; letter-spacing: -0.38px; }
.ptitle.active { background: #fff29d; color: #1e1e1e; letter-spacing: -0.6px; }
.ptitle .caret { margin-right: 2px; }
.pctl { width: 12px; height: 12px; margin-left: 5px; color: #d6dbe9; flex: none; }
.active .pctl { color: #4d5a70; }
.active .caret { border-top-color: #4d5a70; }
.ptools { height: 27px; flex: none; background: #cfd6e5; display: flex; align-items: center; padding-left: 4px; }

/* trees */
.tree { overflow: hidden; min-height: 0; white-space: nowrap; background: #fbfdfb; }
.server-tree { padding-left: 1px; }
.sol-tree { padding-top: 3px; }
.treewrap { display: flex; min-height: 0; }
.row { height: 18px; display: flex; align-items: center; }
.lb { margin-top: -2px; }
.tw { width: 10px; height: 10px; margin-right: 4px; flex: none; }
.st { width: 6px; height: 9px; margin-right: 2px; flex: none; }
.ic { width: 16px; height: 16px; margin-right: 4px; flex: none; }
.sx0 { padding-left: 9px; }
.sx1 { padding-left: 28px; }
.server-tree .tw { margin-right: 3px; }
.d0 { padding-left: 5px; }
.d1 { padding-left: 9px; }
.d2 { padding-left: 27px; }
.d3 { padding-left: 45px; }
.selected { background: #007acc; color: #fff; overflow: hidden; }
.current { background: #ccced9; font-weight: 700; }
.vb { width: 16px; margin-right: 4px; margin-top: -2px; flex: none; color: #00539c; font: 700 10px "Liberation Sans", sans-serif; letter-spacing: 0; text-align: center; }
.vbproj { width: 16px; height: 14px; margin-right: 4px; flex: none; border: 1px solid #00539c; background: #fff; color: #333; font: 8px/12px "Liberation Sans", sans-serif; letter-spacing: 0; text-align: center; }

/* scrollbars */
.vscroll { width: 18px; flex: none; background: #e8e8ec; display: flex; flex-direction: column; align-items: center; padding: 6px 0; }
.arrow-u { width: 0; height: 0; border-left: 5px solid transparent; border-right: 5px solid transparent; border-bottom: 5px solid #868999; }
.arrow-d { width: 0; height: 0; border-left: 5px solid transparent; border-right: 5px solid transparent; border-top: 5px solid #868999; }
.vthumb { width: 9px; height: 270px; background: #c2c3c9; margin-top: 4px; }
.hscroll { height: 18px; flex: none; background: #e8e8ec; display: flex; align-items: center; padding: 0 6px; margin: 0 1px 1px; }
.arrow-l { width: 0; height: 0; border-top: 5px solid transparent; border-bottom: 5px solid transparent; border-right: 5px solid #868999; }
.arrow-r { width: 0; height: 0; border-top: 5px solid transparent; border-bottom: 5px solid transparent; border-left: 5px solid #868999; }
.hthumb { width: 129px; height: 9px; background: #c2c3c9; margin-left: 5px; }

/* tabs */
.tabs { height: 21px; flex: none; display: flex; background: #4d6082; }
.tabs.clear { height: 20px; background: transparent; }
.errtabs { background: transparent; }
.icontabs { background: #4d6082; }
.itab { width: 37.500px; display: flex; align-items: center; justify-content: center; border-left: 1px solid #2c3f62; }
.itab.on { background: #fbfdfb; border: 1px solid #8e9bbc; border-top: 0; }
.tab { padding: 0 6px 0 5px; display: flex; align-items: center; color: #e4e7ef; background: #4d6082; white-space: nowrap; border-right: 1px solid #465a7c; letter-spacing: -0.3px; }
.tab.on { background: #fbfdfb; color: #1e1e1e; border-right: 0; }
.tab.first { padding: 0 6px; margin-top: -1px; height: 21px; letter-spacing: -0.34px; }
.tab-data { letter-spacing: -0.46px; }
.tab-team { letter-spacing: -0.66px; }

/* tooltip + pointer */
.tip { position: absolute; left: 68px; top: 59px; width: 124px; height: 23px; background: #f6f6f6; border: 1px solid #8a8a8a; color: #575757; padding: 0 0 0 6px; line-height: 21px; letter-spacing: -0.4px; }
.mouse { position: absolute; left: 68px; top: 38px; width: 12px; height: 20px; }

/* error list */
.errtools { padding-left: 7px; height: 26px; }
.errtools .combo { height: 20px; padding-right: 5px; }
.combo-scope { width: 149px; margin-right: 4px; }
.combo-build { width: 149px; margin-left: 3px; }
.esep { margin: 0 4px 0 3px; }
.fbtn { height: 22px; background: #fbfcf5; border: 1px solid #4d6082; display: flex; align-items: center; gap: 4px; padding-left: 2px; flex: none; letter-spacing: -0.42px; }
.f-err { width: 70px; }
.f-warn { width: 89px; }
.fplain { width: 92px; display: flex; align-items: center; gap: 4px; padding-left: 4px; flex: none; letter-spacing: -0.42px; }
.searchbox { background: #fbfdfb; display: flex; align-items: center; flex: none; }
.search-err { width: 199px; height: 21px; margin-right: 1px; border: 1px solid #c7cee0; padding: 0 3px 0 4px; gap: 2px; }
.search-sol { height: 22px; padding: 0 3px 0 4px; gap: 4px; margin: 1px 1px 1px; }
.gridhead { height: 21px; flex: none; display: grid; grid-template-columns: 28px 26px 50px 698px 100px 105px 1fr; background: #f1f2f4; border-bottom: 1px solid #ccced9; }
.gh { border-right: 1px solid #ccced9; display: flex; align-items: center; padding: 2px 0 0 4px; gap: 8px; }
.gh:last-child { border-right: 0; }
.gh-corner { justify-content: flex-end; padding: 0 4px 8px 0; }
.cornermark { width: 6px; height: 4px; border-top: 1px solid #555; border-right: 1px solid #555; }
.ghd { margin-top: -2px; }
.gh .caret-up { margin-top: -2px; }
.gridbody { background: #fbfdfb; }

/* properties */
.propcombo { height: 25px; flex: none; display: flex; align-items: center; justify-content: flex-end; padding-right: 2px; background: #fbfdfb; }
.proptools { height: 26px; margin: 0 1px; padding: 0 0 2px 2px; }
.propgrid { background: #fbfdfb; }
.propdesc { height: 62px; flex: none; border-top: 1px solid #e6e6e6; background: #fbfdfb; }

/* status */
.status { height: 22px; flex: none; background: #007acc; color: #fff; display: flex; align-items: center; padding-left: 4px; }
.ready { margin-right: 9px; }
.st-14 { margin: 0 20px 0 6px; color: #e4e7ef; }
.st-4 { margin: 0 20px 0 9px; color: #e4e7ef; }
.st-law { margin: 0 21px 0 6px; color: #e4e7ef; }
.st-master { margin: 0 7px 0 7px; color: #e4e7ef; }
.status .caret-up { margin-right: 21px; }
```
